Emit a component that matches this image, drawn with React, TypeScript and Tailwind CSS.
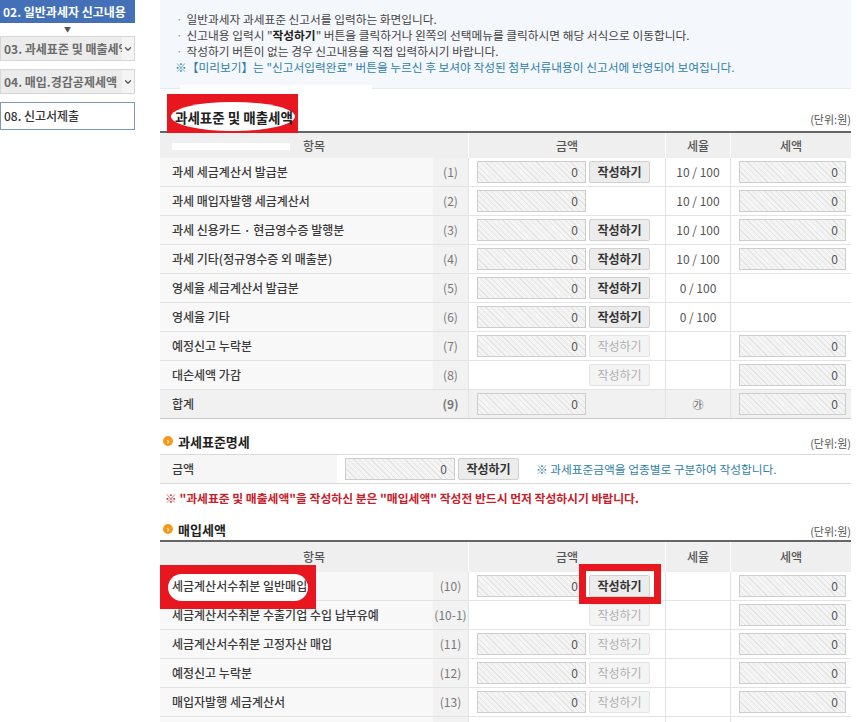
import { ChevronDown } from "lucide-react";

type Row = {
  label: string;
  no: string;
  amount?: boolean;
  btn?: "on" | "off";
  rate?: string;
  tax?: boolean;
  total?: boolean;
  mark?: boolean;
};

const salesRows: Row[] = [
  { label: "과세 세금계산서 발급분", no: "(1)", amount: true, btn: "on", rate: "10 / 100", tax: true },
  { label: "과세 매입자발행 세금계산서", no: "(2)", amount: true, rate: "10 / 100", tax: true },
  { label: "과세 신용카드 · 현금영수증 발행분", no: "(3)", amount: true, btn: "on", rate: "10 / 100", tax: true },
  { label: "과세 기타(정규영수증 외 매출분)", no: "(4)", amount: true, btn: "on", rate: "10 / 100", tax: true },
  { label: "영세율 세금계산서 발급분", no: "(5)", amount: true, btn: "on", rate: "0 / 100" },
  { label: "영세율 기타", no: "(6)", amount: true, btn: "on", rate: "0 / 100" },
  { label: "예정신고 누락분", no: "(7)", amount: true, btn: "off", tax: true },
  { label: "대손세액 가감", no: "(8)", btn: "off", tax: true },
  { label: "합계", no: "(9)", amount: true, rate: "㉮", tax: true, total: true },
];

const buyRows: Row[] = [
  { label: "세금계산서수취분 일반매입", no: "(10)", amount: true, btn: "on", tax: true, mark: true },
  { label: "세금계산서수취분 수출기업 수입 납부유예", no: "(10-1)", btn: "off", tax: true },
  { label: "세금계산서수취분 고정자산 매입", no: "(11)", amount: true, btn: "off", tax: true },
  { label: "예정신고 누락분", no: "(12)", amount: true, btn: "off", tax: true },
  { label: "매입자발행 세금계산서", no: "(13)", amount: true, btn: "off", tax: true },
];

const cols = "grid grid-cols-[273px_35px_197px_65px_121px]";

function Field({ w }: { w: string }) {
  return (
    <div
      className={`${w} h-[22px] border border-[#cdcdcd] bg-[repeating-linear-gradient(45deg,#f4f4f4_0px,#f4f4f4_3px,#e4e4e4_3px,#e4e4e4_4px)] flex items-center justify-end pr-[7px] text-[12px] text-[#555]`}
    >
      0
    </div>
  );
}

function WriteBtn({ on }: { on: boolean }) {
  return (
    <button
      className={`w-[61px] h-[22px] rounded-[2px] border text-[12px] ${
        on
          ? "border-[#d0d0d0] bg-[#ececec] text-[#333] font-semibold"
          : "border-[#e2e2e2] bg-[#f4f4f4] text-[#b0b0b0]"
      }`}
    >
      작성하기
    </button>
  );
}

// 캡처 위에 덧그린 빨간 표시
function RedFrame({
  children,
  outer,
  inner,
}: {
  children: React.ReactNode;
  outer: string;
  inner: string;
}) {
  return (
    <span className="relative inline-block">
      <span className={`absolute bg-[#e8161f] ${outer}`} />
      <span className={`absolute bg-white ${inner}`} />
      <span className="relative">{children}</span>
    </span>
  );
}

function TableRow({ r }: { r: Row }) {
  return (
    <div
      className={`${cols} h-[29px] border-b ${
        r.total ? "bg-[#f1f1f1] border-[#c9c9c9]" : "border-[#e3e3e3]"
      }`}
    >
      <div className={`flex items-center pl-[12px] font-medium text-[#3a3a3a] ${r.total ? "" : "bg-[#f8f8f8]"}`}>
        {r.mark ? (
          <RedFrame
            outer="-left-[12px] -right-[9px] -top-[12px] -bottom-[14px]"
            inner="-left-[4px] -right-[1px] -top-[3px] -bottom-[6px] rounded-[14px]"
          >
            {r.label}
          </RedFrame>
        ) : (
          r.label
        )}
      </div>
      <div
        className={`flex items-center justify-center text-[#777] ${
          r.total ? "font-bold text-[#444]" : "bg-[#f2f2f2]"
        }`}
      >
        {r.no}
      </div>
      <div className="flex items-center gap-[3px] pl-[8px] border-l border-[#e3e3e3]">
        {r.amount ? <Field w="w-[109px]" /> : <div className="w-[109px]" />}
        {r.btn ? (
          r.mark ? (
            <span className="relative flex">
              <span className="absolute -left-[10px] -right-[11px] -top-[11px] -bottom-[7px] border-[7px] border-[#e8161f]" />
              <WriteBtn on />
            </span>
          ) : (
            <WriteBtn on={r.btn === "on"} />
          )
        ) : null}
      </div>
      <div className="flex items-center justify-center border-l border-[#e3e3e3] text-[#555]">
        {r.rate === "㉮" ? <span className="text-[11px] text-[#666]">㉮</span> : r.rate}
      </div>
      <div className="flex items-center pl-[8px] border-l border-[#e3e3e3]">
        {r.tax ? <Field w="w-[107px]" /> : null}
      </div>
    </div>
  );
}

function Header({ h }: { h: string }) {
  return (
    <div className={`${cols} ${h} bg-[#efefef] text-[#555] font-medium`}>
      <div className="col-span-2 flex items-center justify-center">항목</div>
      <div className="flex items-center justify-center border-l border-white">금액</div>
      <div className="flex items-center justify-center border-l border-white">세율</div>
      <div className="flex items-center justify-center border-l border-white">세액</div>
    </div>
  );
}

function Bullet() {
  return (
    <span className="w-[10px] h-[10px] rounded-full bg-[#f39a1e] flex items-center justify-center text-white text-[8px] leading-none font-bold mr-[5px]">
      ›
    </span>
  );
}

export default function App() {
  return (
    <div className="w-[857px] h-[722px] overflow-hidden bg-white flex items-start font-['Noto_Sans_CJK_KR','Noto_Sans',sans-serif] text-[12px] text-[#333]">
      {/* 좌측 메뉴 */}
      <aside className="w-[135px] shrink-0 flex flex-col text-[12px]">
        <div className="h-[23px] bg-[#4370b6] text-white font-bold flex items-center pl-[3px] whitespace-nowrap overflow-hidden">
          02. 일반과세자 신고내용
        </div>
        <div className="h-[13px] flex items-center justify-center text-[7px] text-[#555]">▼</div>
        <div className="h-[25px] mb-[8px] bg-[#ececec] border border-[#d6d6d6] flex items-center text-[#6b6b6b] font-semibold">
          <span className="flex-1 pl-[3px] whitespace-nowrap overflow-hidden">03. 과세표준 및 매출세액</span>
          <span className="w-[12px] shrink-0 h-full bg-[#f4f4f4] flex items-center justify-center">
            <ChevronDown size={10} strokeWidth={3} className="text-[#555]" />
          </span>
        </div>
        <div className="h-[25px] mb-[8px] bg-[#ececec] border border-[#d6d6d6] flex items-center text-[#6b6b6b] font-semibold">
          <span className="flex-1 pl-[3px] whitespace-nowrap overflow-hidden">04. 매입.경감공제세액</span>
          <span className="w-[12px] shrink-0 h-full bg-[#f4f4f4] flex items-center justify-center">
            <ChevronDown size={10} strokeWidth={3} className="text-[#555]" />
          </span>
        </div>
        <div className="h-[28px] bg-white border border-[#7f98ba] flex items-center pl-[3px] text-[#333] font-medium">
          08. 신고서제출
        </div>
      </aside>

      {/* 본문 */}
      <main className="ml-[25px] w-[691px] shrink-0">
        <div className="h-[89px] bg-[#f4f7fb] border-b border-[#e6ebf1] pt-[11px] pl-[16px] text-[11.7px] leading-[16px] text-[#444] relative whitespace-nowrap">
          <p><span className="text-[#999] mr-[4px]">·</span>일반과세자 과세표준 신고서를 입력하는 화면입니다.</p>
          <p>
            <span className="text-[#999] mr-[4px]">·</span>신고내용 입력시 "<b className="text-[#222]">작성하기</b>" 버튼을 클릭하거나 왼쪽의 선택메뉴를 클릭하시면 해당 서식으로 이동합니다.
          </p>
          <p><span className="text-[#999] mr-[4px]">·</span>작성하기 버튼이 없는 경우 신고내용을 직접 입력하시기 바랍니다.</p>
          <p className="text-[#2f7fa8] -ml-[1px]">※【미리보기】는 "신고서입력완료" 버튼을 누르신 후 보셔야 작성된 첨부서류내용이 신고서에 반영되어 보여집니다.</p>
          <div className="absolute left-[20px] bottom-[-3px] w-[192px] h-[6px] bg-white" />
        </div>

        {/* 과세표준 및 매출세액 */}
        <div className="h-[42px] flex items-end justify-between pb-[4px]">
          <span className="ml-[15px] text-[13.5px] font-bold text-[#222]">
            <RedFrame
              outer="-left-[8px] -right-[5px] -top-[13px] -bottom-[7px]"
              inner="-left-[4px] -right-[2px] -top-[5px] -bottom-[4px] rounded-[50%]"
            >
              과세표준 및 매출세액
            </RedFrame>
          </span>
          <span className="text-[11px] text-[#555]">(단위:원)</span>
        </div>
        <div className="border-t-2 border-[#666]">
          <div className="relative">
            <Header h="h-[25px]" />
            <div className="absolute left-[12px] top-[10px] w-[118px] h-[7px] bg-white" />
          </div>
          {salesRows.map((r) => (
            <TableRow key={r.no} r={r} />
          ))}
        </div>

        {/* 과세표준명세 */}
        <div className="h-[35px] flex items-end justify-between pb-[3px]">
          <span className="flex items-center text-[13px] font-bold text-[#222] ml-[3px]">
            <Bullet />
            과세표준명세
          </span>
          <span className="text-[11px] text-[#555]">(단위:원)</span>
        </div>
        <div className="h-[30px] border-y border-[#d9d9d9] flex">
          <div className="w-[177px] bg-[#f6f6f6] flex items-center pl-[12px] font-medium text-[#3a3a3a]">금액</div>
          <div className="flex items-center gap-[3px] pl-[8px]">
            <Field w="w-[110px]" />
            <WriteBtn on />
            <span className="ml-[14px] text-[11.7px] text-[#2f7fa8]">※ 과세표준금액을 업종별로 구분하여 작성합니다.</span>
          </div>
        </div>
        <p className="mt-[5px] h-[17px] pl-[5px] text-[11.8px] font-bold text-[#c8202a] whitespace-nowrap">
          ※ "과세표준 및 매출세액"을 작성하신 분은 "매입세액" 작성전 반드시 먼저 작성하시기 바랍니다.
        </p>

        {/* 매입세액 */}
        <div className="h-[21px] mt-[13px] flex items-end justify-between pb-[1px]">
          <span className="flex items-center text-[13px] font-bold text-[#222] ml-[3px]">
            <Bullet />
            매입세액
          </span>
          <span className="text-[11px] text-[#555]">(단위:원)</span>
        </div>
        <div className="border-t-2 border-[#666]">
          <Header h="h-[30px]" />
          {buyRows.map((r) => (
            <TableRow key={r.no} r={r} />
          ))}
          {/* 화면 하단에서 잘린 다음 행 */}
          <div className={`${cols} h-[29px]`}>
            <div className="bg-[#f8f8f8]" />
            <div className="bg-[#f2f2f2]" />
            <div className="border-l border-[#e3e3e3]" />
            <div className="border-l border-[#e3e3e3]" />
            <div className="border-l border-[#e3e3e3]" />
          </div>
        </div>
      </main>
    </div>
  );
}
